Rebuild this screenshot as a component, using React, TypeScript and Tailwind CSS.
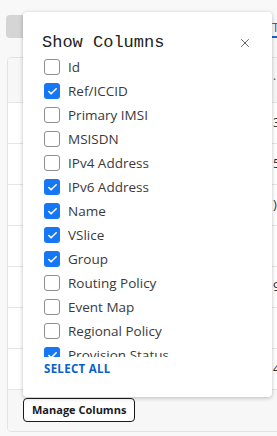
import { Check, X } from "lucide-react";

type Col = { label: string; on: boolean };

const COLUMNS: Col[] = [
  { label: "Id", on: false },
  { label: "Ref/ICCID", on: true },
  { label: "Primary IMSI", on: false },
  { label: "MSISDN", on: false },
  { label: "IPv4 Address", on: false },
  { label: "IPv6 Address", on: true },
  { label: "Name", on: true },
  { label: "VSlice", on: true },
  { label: "Group", on: true },
  { label: "Routing Policy", on: false },
  { label: "Event Map", on: false },
  { label: "Regional Policy", on: false },
  { label: "Provision Status", on: true },
];

const ROW_TAIL = ["3", "5", ")", "", "9", "", "4"];

export default function App() {
  return (
    <div
      className="relative h-[436px] w-[277px] overflow-hidden bg-[#f8f8f8]"
      style={{ fontFamily: "'Open Sans', 'Noto Sans', sans-serif" }}
    >
      {/* Toolbar */}
      <div className="flex items-end justify-between pl-[6px] pt-[14px]">
        <div className="h-[23px] w-[70px] rounded-[4px] bg-[#d5d5d5]" />
        <div className="h-[24px] w-[5px] overflow-hidden border-b-2 border-[#1d64c8]">
          <span className="text-[13px] leading-[20px] text-[#1d64c8]">T</span>
        </div>
      </div>

      {/* Table card */}
      <div className="ml-[7px] mt-[19px] w-[300px] overflow-hidden rounded-l-[4px] border border-[#e3e3e3] bg-white">
        <div className="flex h-[44px] items-center bg-[#f7f7f7] pl-[265px] text-[12px] text-[#555]">·</div>
        {ROW_TAIL.map((t, i) => (
          <div
            key={i}
            className="flex h-[41px] items-center border-t border-[#e6e6e6] pl-[265px] text-[13px] text-[#333]"
          >
            {t}
          </div>
        ))}
        <div className="flex h-[42px] items-start border-t border-[#e6e6e6] bg-[#f7f7f7] pl-[15px] pt-[8px]">
          <button className="h-[24px] rounded-[4px] border border-[#1a1a1a] bg-white px-[8px] text-[11px] font-bold text-[#1a1a1a]">
            Manage Columns
          </button>
        </div>
      </div>

      {/* Show Columns popover */}
      <div className="absolute left-[23px] top-[12px] flex h-[385px] w-[249px] flex-col rounded-[4px] bg-white shadow-[0_1px_4px_rgba(0,0,0,0.25)]">
        <div className="flex items-center justify-between pl-[19px] pr-[20px] pt-[20px]">
          <h2
            className="text-[17px] leading-[22px] text-[#222]"
            style={{ fontFamily: "'Liberation Mono', monospace" }}
          >
            Show Columns
          </h2>
          <X size={14} strokeWidth={1.4} className="text-[#444]" />
        </div>

        <div className="mt-[1px] h-[302px] overflow-hidden pl-[21px]">
          {COLUMNS.map((c) => (
            <label key={c.label} className="flex h-[24px] items-center gap-[8px]">
              {c.on ? (
                <span className="flex h-[16px] w-[16px] items-center justify-center rounded-[3px] bg-[#1677f5]">
                  <Check size={11} strokeWidth={3.5} className="text-white" />
                </span>
              ) : (
                <span className="h-[16px] w-[16px] rounded-[3px] border border-[#8e8e8e] bg-white" />
              )}
              <span className="text-[13.5px] text-[#3a3a3a]">{c.label}</span>
            </label>
          ))}
        </div>

        <button className="ml-[21px] mt-[3px] self-start text-[11.5px] font-bold tracking-[0.3px] text-[#0b5fc9]">
          SELECT ALL
        </button>
      </div>
    </div>
  );
}
